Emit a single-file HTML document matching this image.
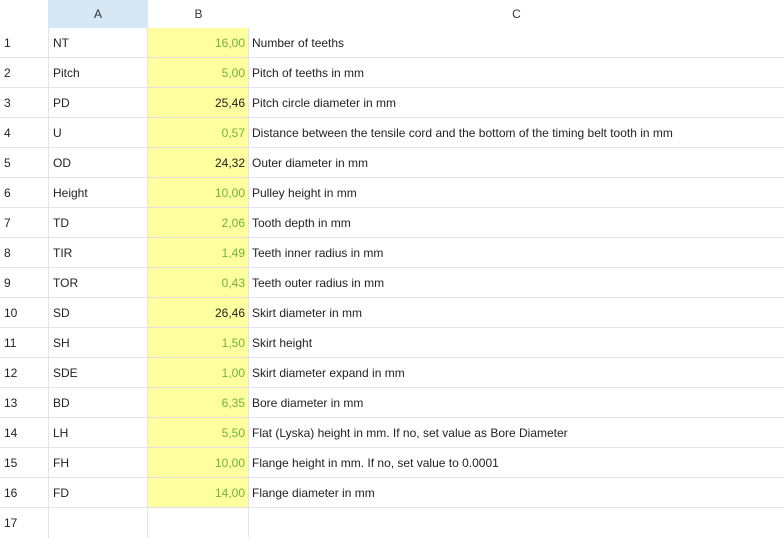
<!DOCTYPE html>
<html><head><style>
body{margin:0;width:784px;height:525px;overflow:hidden;background:#fff;font-family:"Liberation Sans",sans-serif;font-size:12px;color:#222;position:relative}
.h{position:absolute;top:0;height:28px;line-height:28px;text-align:center;color:#333}
.r{position:absolute;left:0;width:784px;height:30px;border-bottom:1px solid #e3e3e3;box-sizing:border-box}
.n{position:absolute;left:4px;top:0;line-height:30px}
.a{position:absolute;left:48px;width:100px;height:30px;border-left:1px solid #e3e3e3;border-right:1px solid #e3e3e3;line-height:30px;padding-left:4px;box-sizing:border-box}
.b{position:absolute;left:148px;width:101px;height:29px;background:#ffff9f;border-right:1px solid #e3e3e3;line-height:30px;text-align:right;padding-right:3px;box-sizing:border-box;color:#6fb43a}
.b.k{color:#222}
.c{position:absolute;left:252px;line-height:30px}
</style></head><body>
<div class="h" style="left:48px;width:100px;background:#d6e7f6">A</div>
<div class="h" style="left:148px;width:101px">B</div>
<div class="h" style="left:249px;width:535px">C</div>
<div style="position:absolute;top:28px;left:0;width:784px">
<div class="r" style="top:0"><span class="n">1</span><div class="a">NT</div><div class="b">16,00</div><span class="c">Number of teeths</span></div>
<div class="r" style="top:30px"><span class="n">2</span><div class="a">Pitch</div><div class="b">5,00</div><span class="c">Pitch of teeths in mm</span></div>
<div class="r" style="top:60px"><span class="n">3</span><div class="a">PD</div><div class="b k">25,46</div><span class="c">Pitch circle diameter in mm</span></div>
<div class="r" style="top:90px"><span class="n">4</span><div class="a">U</div><div class="b">0,57</div><span class="c">Distance between the tensile cord and the bottom of the timing belt tooth in mm</span></div>
<div class="r" style="top:120px"><span class="n">5</span><div class="a">OD</div><div class="b k">24,32</div><span class="c">Outer diameter in mm</span></div>
<div class="r" style="top:150px"><span class="n">6</span><div class="a">Height</div><div class="b">10,00</div><span class="c">Pulley height in mm</span></div>
<div class="r" style="top:180px"><span class="n">7</span><div class="a">TD</div><div class="b">2,06</div><span class="c">Tooth depth in mm</span></div>
<div class="r" style="top:210px"><span class="n">8</span><div class="a">TIR</div><div class="b">1,49</div><span class="c">Teeth inner radius in mm</span></div>
<div class="r" style="top:240px"><span class="n">9</span><div class="a">TOR</div><div class="b">0,43</div><span class="c">Teeth outer radius in mm</span></div>
<div class="r" style="top:270px"><span class="n">10</span><div class="a">SD</div><div class="b k">26,46</div><span class="c">Skirt diameter in mm</span></div>
<div class="r" style="top:300px"><span class="n">11</span><div class="a">SH</div><div class="b">1,50</div><span class="c">Skirt height</span></div>
<div class="r" style="top:330px"><span class="n">12</span><div class="a">SDE</div><div class="b">1,00</div><span class="c">Skirt diameter expand in mm</span></div>
<div class="r" style="top:360px"><span class="n">13</span><div class="a">BD</div><div class="b">6,35</div><span class="c">Bore diameter in mm</span></div>
<div class="r" style="top:390px"><span class="n">14</span><div class="a">LH</div><div class="b">5,50</div><span class="c">Flat (Lyska) height in mm. If no, set value as Bore Diameter</span></div>
<div class="r" style="top:420px"><span class="n">15</span><div class="a">FH</div><div class="b">10,00</div><span class="c">Flange height in mm. If no, set value to 0.0001</span></div>
<div class="r" style="top:450px"><span class="n">16</span><div class="a">FD</div><div class="b">14,00</div><span class="c">Flange diameter in mm</span></div>
<div class="r" style="top:480px;border:0"><span class="n">17</span><div class="a"></div><div class="b" style="background:#fff"></div></div>
</div>
</body></html>
